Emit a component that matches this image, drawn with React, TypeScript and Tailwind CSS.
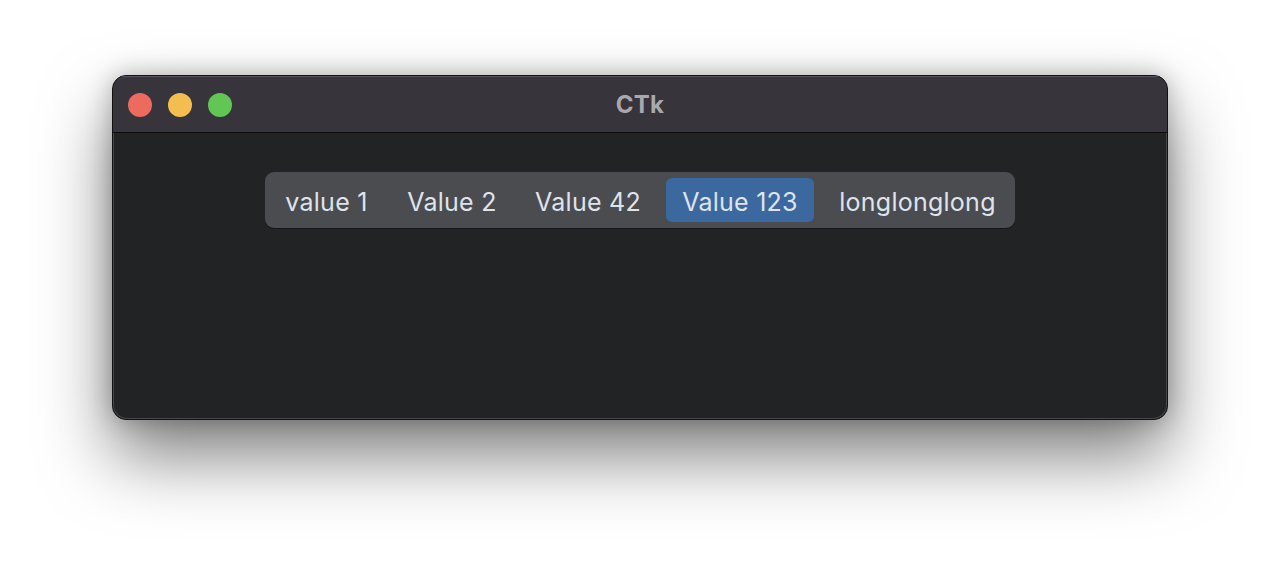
const segments = [
  { label: 'value 1', w: 111 },
  { label: 'Value 2', w: 116 },
  { label: 'Value 42', w: 132 },
  { label: 'Value 123', w: 148, active: true },
  { label: 'longlonglong', w: 183 },
];

export default function App() {
  return (
    <div className="w-[1280px] h-[568px] bg-white overflow-hidden pt-[75px] pl-[112px] font-['Inter','Liberation_Sans',sans-serif]">
      {/* window */}
      <div className="w-[1056px] h-[345px] rounded-[14px] bg-[#222325] border border-[#111] shadow-[0_36px_70px_rgba(0,0,0,0.5),0_0_24px_rgba(0,0,0,0.25)] overflow-hidden flex flex-col">
        <div className="relative h-[57px] shrink-0 bg-[#37343b] border-t border-[#5a575e] border-b border-b-[#0c0c0d] flex items-center">
          <div className="flex items-center gap-4 pl-[15px]">
            <span className="w-6 h-6 rounded-full bg-[#ec6a5e]" />
            <span className="w-6 h-6 rounded-full bg-[#f3be4f]" />
            <span className="w-6 h-6 rounded-full bg-[#62c654]" />
          </div>
          <div className="absolute inset-0 flex items-center justify-center text-[24px] font-bold text-[#aaa8ad] tracking-[0.01em]">
            CTk
          </div>
        </div>
        <div className="flex-1 flex justify-center pt-[39px] border-x border-b border-[#48484a] rounded-b-[14px]">
          <div className="h-[56px] rounded-[9px] bg-[#4b4c4f] p-[6px] flex gap-[12px] shadow-[0_1px_0_rgba(0,0,0,0.35)]">
            {segments.map((s) => (
              <div
                key={s.label}
                style={{ width: s.w }}
                className={
                  'h-full flex items-center justify-center pt-[5px] rounded-[6px] text-[25px] tracking-[0.01em] text-[#dfe3ec] ' +
                  (s.active ? 'bg-[#3c68a0]' : '')
                }
              >
                {s.label}
              </div>
            ))}
          </div>
        </div>
      </div>
    </div>
  );
}
